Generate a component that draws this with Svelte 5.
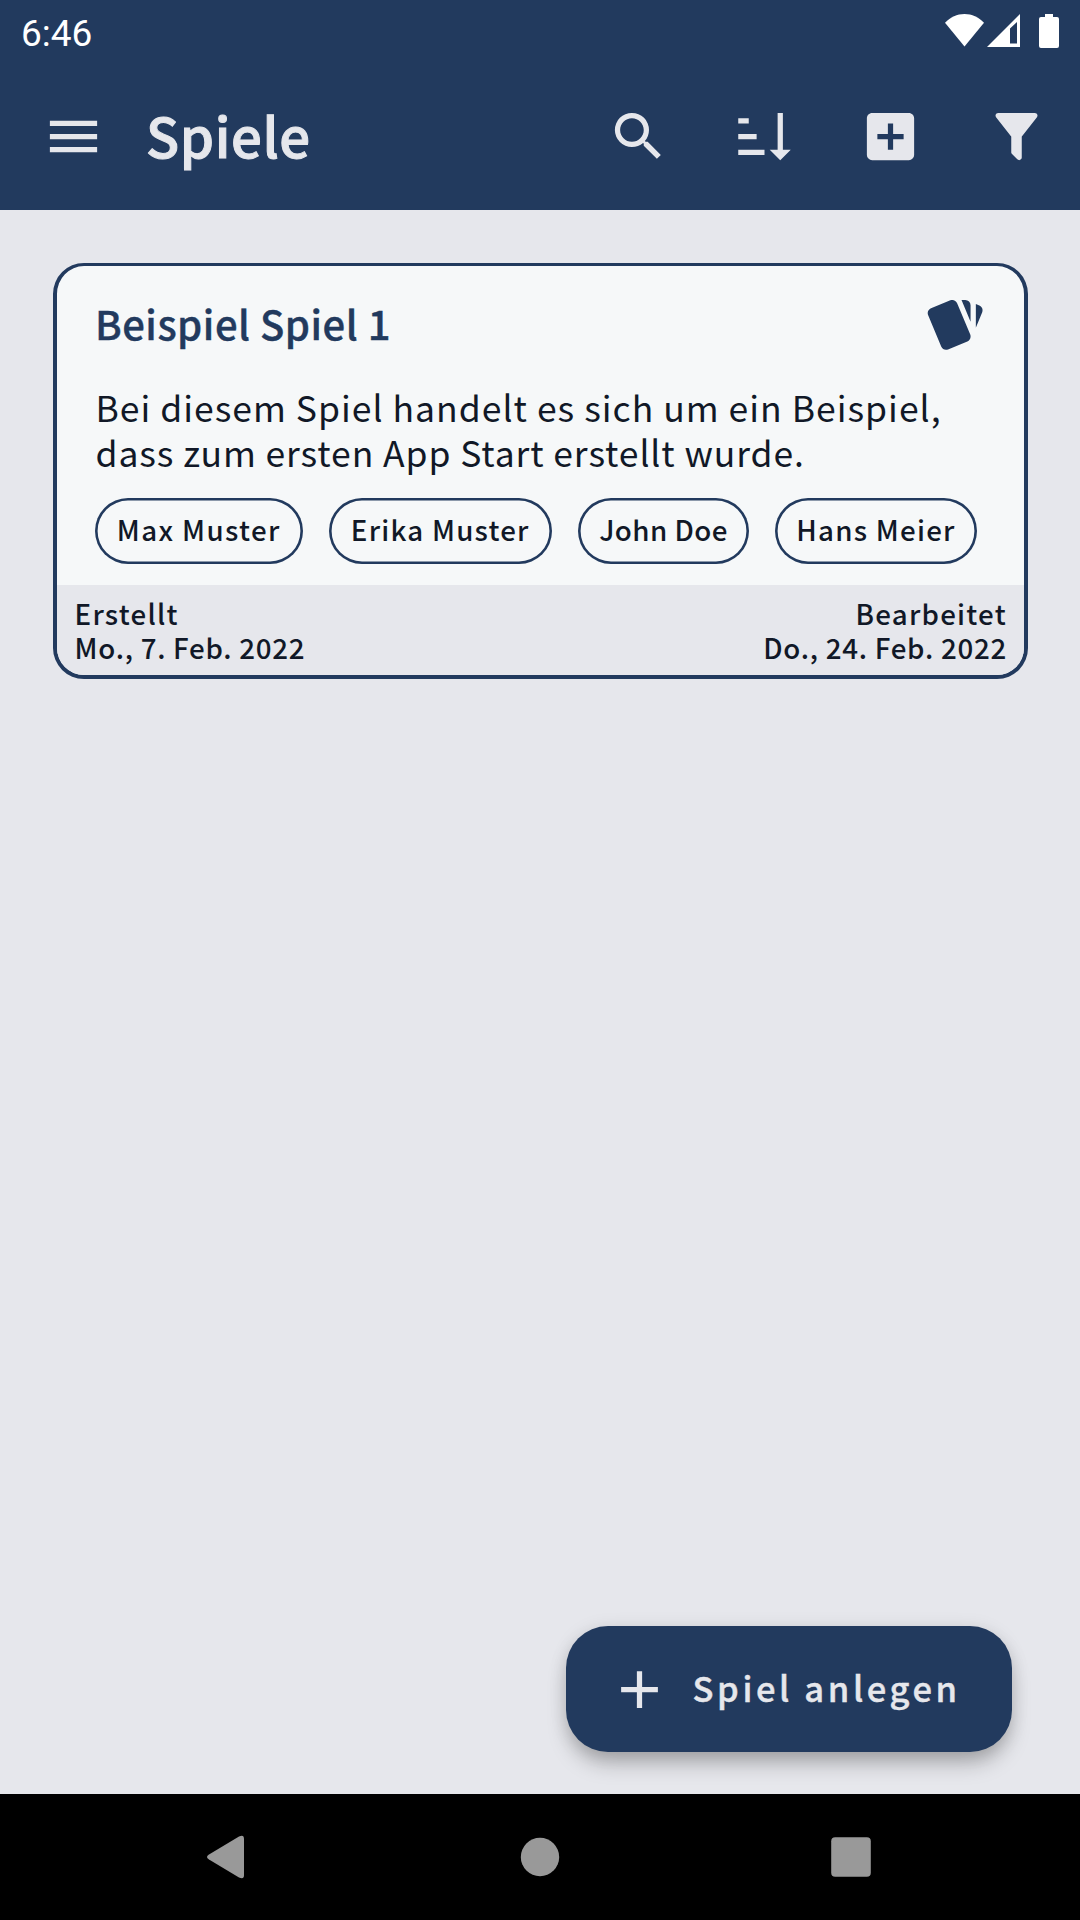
<script>
  const players = [
    { name: 'Max Muster', width: 207.5, tracking: 1.39 },
    { name: 'Erika Muster', width: 223.5, tracking: 1.23 },
    { name: 'John Doe', width: 171, tracking: 0.45 },
    { name: 'Hans Meier', width: 202, tracking: 1.24 }
  ];

  const actions = [
    {
      label: 'Suchen',
      path: 'M9.5 3A6.5 6.5 0 0 1 16 9.5C16 11.11 15.41 12.59 14.44 13.73L14.71 14H15.5L20.5 19L19 20.5L14 15.5V14.71L13.73 14.44C12.59 15.41 11.11 16 9.5 16A6.5 6.5 0 0 1 3 9.5A6.5 6.5 0 0 1 9.5 3M9.5 5C7 5 5 7 5 9.5C5 12 7 14 9.5 14C12 14 14 12 14 9.5C14 7 12 5 9.5 5Z'
    },
    {
      label: 'Sortieren',
      path: 'M19 17H22L18 21L14 17H17V3H19M2 17H12V19H2M6 5V7H2V5M2 11H9V13H2V11Z'
    },
    {
      label: 'Neu',
      path: 'M17 13H13V17H11V13H7V11H11V7H13V11H17M19 3H5C3.89 3 3 3.89 3 5V19A2 2 0 0 0 5 21H19A2 2 0 0 0 21 19V5C21 3.89 20.1 3 19 3Z'
    },
    {
      label: 'Filtern',
      path: 'M14 12V19.88C14.04 20.18 13.94 20.5 13.71 20.71C13.32 21.1 12.69 21.1 12.3 20.71L10.29 18.7C10.06 18.47 9.96 18.16 10 17.87V12H9.97L4.21 4.62C3.87 4.19 3.95 3.56 4.38 3.22C4.57 3.08 4.78 3 5 3H19C19.22 3 19.43 3.08 19.62 3.22C20.05 3.56 20.13 4.19 19.79 4.62L14.03 12H14Z'
    }
  ];
</script>

<div class="screen">
  <div class="status">
    <span class="clock">6:46</span>
    <svg class="indicators" viewBox="944 0 117 63" aria-hidden="true">
      <path d="M964.5 46.5 945 22.8C950.5 17.3 957 14 964.5 14S978.500 17.300 984 22.800Z" />
      <path fill-rule="evenodd" d="M987 47 1020 14V47ZM1010 28.500V43.500H1017V22Z" />
      <path d="M1045 14H1053V17H1057Q1059 17 1059 19V46Q1059 48 1057 48H1041Q1039 48 1039 46V19Q1039 17 1041 17H1045Z" />
    </svg>
  </div>

  <header class="appbar">
    <svg class="icon" viewBox="0 0 24 24" aria-label="Menü"><path d="M3 18H21V16H3ZM3 13H21V11H3ZM3 6V8H21V6Z" /></svg>
    <h1>Spiele</h1>
    <div class="actions">
      {#each actions as action}
        <svg class="icon" viewBox="0 0 24 24" aria-label={action.label}><path d={action.path} /></svg>
      {/each}
    </div>
  </header>

  <main>
    <article class="card">
      <div class="body">
        <div class="heading">
          <h2>Beispiel Spiel 1</h2>
          <svg class="icon" viewBox="0 0 24 24" aria-hidden="true">
            <path d="M21.47 4.35L20.13 3.79V12.82L22.56 6.96C22.97 5.94 22.5 4.77 21.47 4.35M1.97 8.05L6.93 20C7.24 20.77 7.97 21.24 8.74 21.26C9 21.26 9.27 21.21 9.53 21.1L16.9 18.05C17.65 17.74 18.11 17 18.13 16.26C18.14 16 18.09 15.71 18 15.45L13 3.5C12.71 2.73 11.97 2.26 11.19 2.25C10.93 2.25 10.67 2.31 10.42 2.4L3.06 5.45C2.04 5.87 1.55 7.04 1.97 8.05M18.12 4.25A2 2 0 0 0 16.12 2.25H14.67L18.12 10.59" />
          </svg>
        </div>
        <p class="text">
          <span class="line first">Bei diesem Spiel handelt es sich um ein Beispiel,</span>
          <span class="line second">dass zum ersten App Start erstellt wurde.</span>
        </p>
        <div class="chips">
          {#each players as p}
            <span class="chip" style="width: {p.width}px; letter-spacing: {p.tracking}px">{p.name}</span>
          {/each}
        </div>
      </div>
      <footer class="dates">
        <div>
          <div class="label">Erstellt</div>
          <div>Mo., 7. Feb. 2022</div>
        </div>
        <div class="right">
          <div class="label">Bearbeitet</div>
          <div>Do., 24. Feb. 2022</div>
        </div>
      </footer>
    </article>

    <button class="fab">
      <svg class="icon" viewBox="0 0 24 24" aria-hidden="true"><path d="M19 13H13V19H11V13H5V11H11V5H13V11H19V13Z" /></svg>
      <span>Spiel anlegen</span>
    </button>
  </main>

  <nav>
    <svg viewBox="204 1835 44 44" aria-label="Zurück"><path d="M209 1854.500 239 1836.500Q244 1834 244 1839V1875Q244 1880 239 1877.500L209 1859.500Q205 1857 209 1854.500Z" /></svg>
    <svg viewBox="517 1835 44 44" aria-label="Start"><circle cx="540" cy="1857" r="19.200" /></svg>
    <svg viewBox="829 1835 44 44" aria-label="Übersicht"><rect x="831.200" y="1837.200" width="39.600" height="39.600" rx="4" /></svg>
  </nav>
</div>

<style>
  :global(body) {
    margin: 0;
  }

  .screen {
    display: flex;
    flex-direction: column;
    width: 1080px;
    height: 1920px;
    background: #e6e7ec;
    color: #111827;
    font-family: 'Noto Sans CJK SC', 'Noto Sans', sans-serif;
    font-weight: 500;
  }

  h1,
  h2,
  p {
    margin: 0;
    font-weight: 500;
  }

  svg {
    display: block;
    flex: none;
  }

  .icon {
    width: 63px;
    height: 63px;
    fill: currentColor;
  }

  .status {
    display: flex;
    justify-content: space-between;
    height: 63px;
    padding: 0 19px 0 21px;
    background: #223a5e;
    color: #fff;
  }

  .clock {
    font: 400 37px/67px Roboto, sans-serif;
  }

  .indicators {
    width: 117px;
    height: 63px;
    fill: #fff;
  }

  .appbar {
    display: flex;
    align-items: center;
    box-sizing: border-box;
    height: 147px;
    padding: 0 32px 0 42px;
    background: #223a5e;
    color: #e6e7ec;
  }

  h1 {
    margin-left: 41px;
    padding-bottom: 3px;
    font-size: 54.5px;
    line-height: 80px;
    letter-spacing: 0.6px;
    -webkit-text-stroke: 1px currentColor;
  }

  .actions {
    display: flex;
    gap: 63px;
    margin-left: auto;
  }

  main {
    display: flex;
    flex: 1;
    flex-direction: column;
    justify-content: space-between;
    padding: 53px 52px 42px 53px;
  }

  .card {
    overflow: hidden;
    border: solid #223a5e;
    border-width: 3px 4px 4px;
    border-radius: 31px;
    background: #f6f8f9;
  }

  .body {
    padding: 28px 38px 21px;
  }

  .heading {
    display: flex;
    align-items: flex-start;
    justify-content: space-between;
    color: #223a5e;
  }

  h2 {
    padding-top: 1px;
    font-size: 40px;
    line-height: 57px;
    letter-spacing: 0.52px;
    -webkit-text-stroke: 0.4px currentColor;
  }

  .text {
    margin: 27px 0 0 0.5px;
    font-size: 35.5px;
    font-weight: 400;
    line-height: 45px;
    white-space: nowrap;
  }

  .line {
    display: block;
  }

  .first {
    letter-spacing: 1.01px;
  }

  .second {
    letter-spacing: 0.89px;
  }

  .chips {
    display: flex;
    gap: 26px;
    margin-top: 24px;
  }

  .chip {
    box-sizing: border-box;
    flex: none;
    height: 66px;
    border-radius: 33px;
    box-shadow: inset 0 0 0 2.6px #223a5e;
    font-size: 27.7px;
    line-height: 63px;
    text-align: center;
    white-space: nowrap;
  }

  .dates {
    display: flex;
    justify-content: space-between;
    padding: 11px 17px 11px 17.5px;
    background: #e6e7ec;
    font-size: 27.7px;
    line-height: 34px;
    letter-spacing: 0.74px;
  }

  .label {
    letter-spacing: 1.27px;
  }

  .right {
    text-align: right;
  }

  .fab {
    display: flex;
    align-items: center;
    align-self: flex-end;
    box-sizing: border-box;
    width: 446px;
    height: 126px;
    margin-right: 16.5px;
    padding: 0 0 0 42px;
    border: 0;
    border-radius: 42px;
    background: #223a5e;
    box-shadow: 0 14px 22px -4px rgba(0, 0, 0, 0.28), 0 2px 18px rgba(0, 0, 0, 0.1);
    color: #e6e7ec;
    font: inherit;
    font-size: 34.5px;
    letter-spacing: 3.6px;
    white-space: nowrap;
  }

  .fab span {
    margin-left: 22px;
    padding-bottom: 5px;
    line-height: 50px;
    -webkit-text-stroke: 0.4px currentColor;
  }

  nav {
    display: flex;
    align-items: center;
    justify-content: space-between;
    box-sizing: border-box;
    height: 126px;
    padding: 0 207px 0 204px;
    background: #000;
  }

  nav svg {
    width: 44px;
    height: 44px;
    fill: #999;
  }
</style>
